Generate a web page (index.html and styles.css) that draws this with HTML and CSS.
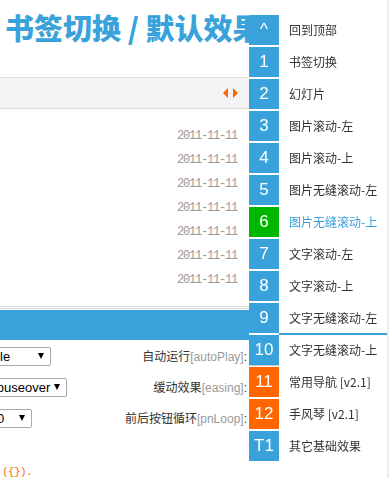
FILE: index.html
```html
<!DOCTYPE html>
<html lang="zh-CN">
<head>
<meta charset="utf-8">
<title>书签切换 / 默认效果</title>
<link rel="stylesheet" href="styles.css">
</head>
<body>
<div class="main">
  <h1 class="title">书签切换 / 默认效果</h1>
  <div class="tabbar">
    <span class="arrows"><i class="tri tri-l"></i><i class="tri tri-r"></i></span>
  </div>
  <ul class="list">
    <li>2011-11-11</li>
    <li>2011-11-11</li>
    <li>2011-11-11</li>
    <li>2011-11-11</li>
    <li>2011-11-11</li>
    <li>2011-11-11</li>
    <li>2011-11-11</li>
  </ul>
  <div class="bluebar"></div>
  <div class="opts">
    <div class="opt">
      <span class="sel s1"><span>le</span><i class="caret"></i></span>
      <span class="lbl">自动运行<em>[autoPlay]</em>:</span>
    </div>
    <div class="opt">
      <span class="sel s2"><span>mouseover</span><i class="caret"></i></span>
      <span class="lbl">缓动效果<em>[easing]</em>:</span>
    </div>
    <div class="opt">
      <span class="sel s3"><span>0</span><i class="caret"></i></span>
      <span class="lbl">前后按钮循环<em>[pnLoop]</em>:</span>
    </div>
  </div>
  <div class="code">({}).</div>
</div>

<nav class="sidenav">
  <a class="item"><span class="num">^</span><span class="txt">回到顶部</span></a>
  <a class="item"><span class="num">1</span><span class="txt">书签切换</span></a>
  <a class="item"><span class="num">2</span><span class="txt">幻灯片</span></a>
  <a class="item"><span class="num">3</span><span class="txt">图片滚动-左</span></a>
  <a class="item"><span class="num">4</span><span class="txt">图片滚动-上</span></a>
  <a class="item"><span class="num">5</span><span class="txt">图片无缝滚动-左</span></a>
  <a class="item active"><span class="num">6</span><span class="txt">图片无缝滚动-上</span></a>
  <a class="item"><span class="num">7</span><span class="txt">文字滚动-左</span></a>
  <a class="item"><span class="num">8</span><span class="txt">文字滚动-上</span></a>
  <a class="item underline"><span class="num">9</span><span class="txt">文字无缝滚动-左</span></a>
  <a class="item hover"><span class="num">10</span><span class="txt">文字无缝滚动-上</span></a>
  <a class="item orange"><span class="num">11</span><span class="txt">常用导航 [v2.1]</span></a>
  <a class="item orange"><span class="num">12</span><span class="txt">手风琴 [v2.1]</span></a>
  <a class="item"><span class="num">T1</span><span class="txt">其它基础效果</span></a>
</nav>
</body>
</html>
```

FILE: styles.css
```css
html, body {
  margin: 0;
  padding: 0;
  background: #fff;
}
body {
  font-family: "Liberation Sans", "Noto Sans CJK SC", sans-serif;
  font-size: 12px;
  color: #333;
  overflow: hidden;
}

.main {
  width: 249px;
  overflow: hidden;
}

.title {
  margin: 7px 0 0 0;
  padding: 0 0 0 5px;
  height: 70px;
  line-height: 40px;
  font-family: "Noto Sans CJK SC", sans-serif;
  font-size: 29px;
  font-weight: 900;
  color: #3aa2db;
  white-space: nowrap;
}

.tabbar {
  height: 30px;
  border-top: 1px solid #dedede;
  border-bottom: 1px solid #dedede;
  background: #f3f3f3;
  display: flex;
  justify-content: flex-end;
  align-items: center;
  padding-right: 11px;
}
.arrows {
  display: flex;
  gap: 5px;
  margin-top: -1px;
}
.tri {
  display: block;
  width: 0;
  height: 0;
  border-top: 5px solid transparent;
  border-bottom: 5px solid transparent;
}
.tri-l { border-right: 5px solid #ff6600; }
.tri-r { border-left: 5px solid #ff6600; }

.list {
  list-style: none;
  margin: 0;
  padding: 15px 12px 14px 0;
  border-bottom: 3px double #dcdcdc;
}
.list li {
  height: 24px;
  line-height: 24px;
  text-align: right;
  font-family: "Liberation Mono", monospace;
  font-size: 12px;
  letter-spacing: -1.2px;
  color: #999;
}

.bluebar {
  margin-top: 1px;
  height: 30px;
  background: #3aa2db;
}

.opts {
  display: flex;
  flex-direction: column;
}
.opt {
  height: 31px;
  display: flex;
  align-items: center;
  justify-content: space-between;
  padding-right: 2px;
}
.sel {
  box-sizing: border-box;
  height: 19px;
  border: 1px solid #a9a9a9;
  border-radius: 2px;
  background: #fff;
  display: flex;
  align-items: center;
  justify-content: space-between;
  padding-right: 6px;
  font-family: "Liberation Sans", sans-serif;
  font-size: 13px;
  color: #000;
  white-space: nowrap;
  overflow: hidden;
  margin-top: 1px;
}
.s1 { margin-left: -10px; width: 61px; padding-left: 9px; }
.s2 { margin-left: -20px; width: 87px; padding-left: 5px; }
.s3 { margin-left: -10px; width: 42px; padding-left: 6px; }
.caret {
  display: block;
  width: 0;
  height: 0;
  border-left: 3px solid transparent;
  border-right: 3px solid transparent;
  border-top: 6px solid #000;
  flex: none;
}
.lbl {
  font-family: "Liberation Sans", "Noto Sans CJK SC", sans-serif;
  font-size: 12px;
  color: #333;
  white-space: nowrap;
}
.lbl em {
  font-style: normal;
  color: #999;
}

.code {
  margin-top: 34px;
  padding-left: 2px;
  height: 10px;
  line-height: 10px;
  font-family: "Liberation Mono", monospace;
  font-size: 11px;
  letter-spacing: -0.6px;
  color: #ff6600;
}

/* side navigation */
.sidenav {
  position: fixed;
  top: 0;
  left: 249px;
  width: 140px;
  height: 100%;
  border-right: 2px solid #ececec;
  padding-top: 15px;
  box-sizing: border-box;
  display: flex;
  flex-direction: column;
  gap: 2px;
  background: linear-gradient(to right, transparent 30px, #fff 30px);
}
.item {
  display: flex;
  height: 30px;
  align-items: stretch;
  text-decoration: none;
}
.num {
  width: 30px;
  flex: none;
  background: #3aa2db;
  color: #fff;
  font-family: "Liberation Sans", sans-serif;
  font-size: 17px;
  line-height: 30px;
  text-align: center;
}
.txt {
  flex: 1;
  padding-left: 10px;
  line-height: 30px;
  font-family: "Noto Sans CJK SC", sans-serif;
  font-size: 12px;
  color: #333;
  background: #fff;
  white-space: nowrap;
}
.item.active .num { background: #00b700; }
.item.active .txt { color: #3aa2db; }
.item.orange .num { background: #ff6600; }
.item.underline .txt { box-shadow: 0 2px 0 #3aa2db; }
.item.hover .num { box-shadow: 0 1px 0 #c8c8c8; }
```
